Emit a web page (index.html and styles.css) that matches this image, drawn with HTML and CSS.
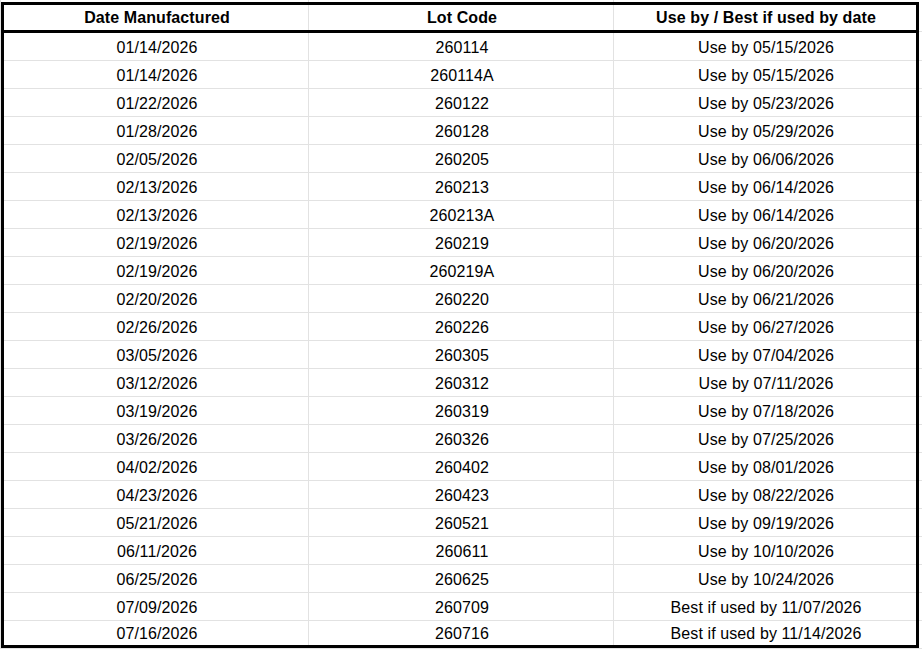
FILE: index.html
```html
<!DOCTYPE html>
<html>
<head>
<meta charset="utf-8">
<link rel="stylesheet" href="styles.css">
</head>
<body>
<div class="sheet">
  <div class="row head">
    <div class="cell">Date Manufactured</div>
    <div class="cell">Lot Code</div>
    <div class="cell">Use by / Best if used by date</div>
  </div>
  <div class="row"><div class="cell">01/14/2026</div><div class="cell">260114</div><div class="cell">Use by 05/15/2026</div></div>
  <div class="row"><div class="cell">01/14/2026</div><div class="cell">260114A</div><div class="cell">Use by 05/15/2026</div></div>
  <div class="row"><div class="cell">01/22/2026</div><div class="cell">260122</div><div class="cell">Use by 05/23/2026</div></div>
  <div class="row"><div class="cell">01/28/2026</div><div class="cell">260128</div><div class="cell">Use by 05/29/2026</div></div>
  <div class="row"><div class="cell">02/05/2026</div><div class="cell">260205</div><div class="cell">Use by 06/06/2026</div></div>
  <div class="row"><div class="cell">02/13/2026</div><div class="cell">260213</div><div class="cell">Use by 06/14/2026</div></div>
  <div class="row"><div class="cell">02/13/2026</div><div class="cell">260213A</div><div class="cell">Use by 06/14/2026</div></div>
  <div class="row"><div class="cell">02/19/2026</div><div class="cell">260219</div><div class="cell">Use by 06/20/2026</div></div>
  <div class="row"><div class="cell">02/19/2026</div><div class="cell">260219A</div><div class="cell">Use by 06/20/2026</div></div>
  <div class="row"><div class="cell">02/20/2026</div><div class="cell">260220</div><div class="cell">Use by 06/21/2026</div></div>
  <div class="row"><div class="cell">02/26/2026</div><div class="cell">260226</div><div class="cell">Use by 06/27/2026</div></div>
  <div class="row"><div class="cell">03/05/2026</div><div class="cell">260305</div><div class="cell">Use by 07/04/2026</div></div>
  <div class="row"><div class="cell">03/12/2026</div><div class="cell">260312</div><div class="cell">Use by 07/11/2026</div></div>
  <div class="row"><div class="cell">03/19/2026</div><div class="cell">260319</div><div class="cell">Use by 07/18/2026</div></div>
  <div class="row"><div class="cell">03/26/2026</div><div class="cell">260326</div><div class="cell">Use by 07/25/2026</div></div>
  <div class="row"><div class="cell">04/02/2026</div><div class="cell">260402</div><div class="cell">Use by 08/01/2026</div></div>
  <div class="row"><div class="cell">04/23/2026</div><div class="cell">260423</div><div class="cell">Use by 08/22/2026</div></div>
  <div class="row"><div class="cell">05/21/2026</div><div class="cell">260521</div><div class="cell">Use by 09/19/2026</div></div>
  <div class="row"><div class="cell">06/11/2026</div><div class="cell">260611</div><div class="cell">Use by 10/10/2026</div></div>
  <div class="row"><div class="cell">06/25/2026</div><div class="cell">260625</div><div class="cell">Use by 10/24/2026</div></div>
  <div class="row"><div class="cell">07/09/2026</div><div class="cell">260709</div><div class="cell">Best if used by 11/07/2026</div></div>
  <div class="row last"><div class="cell">07/16/2026</div><div class="cell">260716</div><div class="cell">Best if used by 11/14/2026</div></div>
</div>
</body>
</html>
```

FILE: styles.css
```css
html, body {
  margin: 0;
  height: 100%;
}

body {
  padding: 2px 0 0 1px;
  box-sizing: border-box;
  background-color: #fff;
  background-image:
    linear-gradient(#e2e2e2, #e2e2e2),
    linear-gradient(#e2e2e2, #e2e2e2),
    linear-gradient(#e2e2e2, #e2e2e2),
    linear-gradient(#e2e2e2, #e2e2e2),
    repeating-linear-gradient(to bottom, transparent 0, transparent 27px, #e2e2e2 27px, #e2e2e2 28px);
  background-repeat: no-repeat;
  background-position: 308px 0, 613px 0, 0 0, 0 31px, 0 33px;
  background-size: 1px 100%, 1px 100%, 1px 100%, 100% 1px, 100% 100%;
  font-family: "Liberation Sans", Arial, sans-serif;
  font-size: 16px;
  letter-spacing: 0.1px;
  color: #000;
}

.sheet {
  width: 918px;
  box-sizing: border-box;
  border: 3px solid #000;
  background: #fff;
}

.row {
  display: grid;
  grid-template-columns: 305px 305px 302px;
  height: 28px;
  box-sizing: border-box;
  border-bottom: 1px solid #e2e2e2;
}

.row.head {
  height: 28px;
  border-bottom: 3px solid #000;
  font-weight: bold;
}

.row.last {
  height: 24px;
  border-bottom: none;
}

.cell {
  display: flex;
  align-items: center;
  justify-content: center;
  white-space: nowrap;
  box-sizing: border-box;
  padding: 2px 0 0 2px;
  border-right: 1px solid #e2e2e2;
}

.row.head .cell {
  padding-top: 1px;
}

.cell:last-child {
  border-right: none;
}
```
